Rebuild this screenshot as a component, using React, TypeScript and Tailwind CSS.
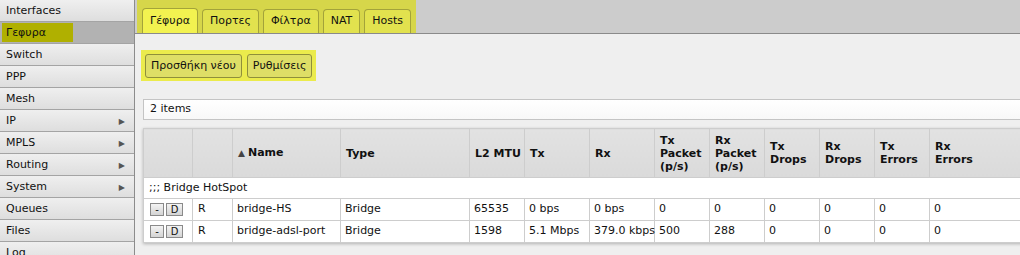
const menu = [
  { label: "Interfaces" },
  { label: "Γεφυρα", active: true },
  { label: "Switch" },
  { label: "PPP" },
  { label: "Mesh" },
  { label: "IP", sub: true },
  { label: "MPLS", sub: true },
  { label: "Routing", sub: true },
  { label: "System", sub: true },
  { label: "Queues" },
  { label: "Files" },
  { label: "Log" },
];

const tabs = ["Γέφυρα", "Πορτες", "Φίλτρα", "NAT", "Hosts"];

const columns = [
  { label: "", width: 49 },
  { label: "", width: 40 },
  { label: "Name", width: 108, sort: true },
  { label: "Type", width: 129 },
  { label: "L2 MTU", width: 55 },
  { label: "Tx", width: 65 },
  { label: "Rx", width: 65 },
  { label: "Tx\nPacket\n(p/s)", width: 55 },
  { label: "Rx\nPacket\n(p/s)", width: 55 },
  { label: "Tx\nDrops", width: 55 },
  { label: "Rx\nDrops", width: 55 },
  { label: "Tx\nErrors", width: 55 },
  { label: "Rx\nErrors", width: 100 },
];

const rows = [
  ["bridge-HS", "Bridge", "65535", "0 bps", "0 bps", "0", "0", "0", "0", "0", "0"],
  ["bridge-adsl-port", "Bridge", "1598", "5.1 Mbps", "379.0 kbps", "500", "288", "0", "0", "0", "0"],
];

function SmallButton({ label, w }: { label: string; w: string }) {
  return (
    <span
      className={`inline-flex h-[13px] ${w} items-center justify-center border border-[#8a8a8a] bg-gradient-to-b from-[#f4f4f4] to-[#d4d4d4] text-[10px] leading-none text-[#111]`}
    >
      {label}
    </span>
  );
}

export default function App() {
  return (
    <div className="flex h-[255px] w-[1020px] overflow-hidden bg-[#efefef] font-['DejaVu_Sans',Verdana,sans-serif] text-[11px] text-[#111]">
      {/* sidebar */}
      <aside className="flex w-[135px] shrink-0 flex-col border-r border-[#8c8c8c] bg-[#dcdcdc]">
        {menu.map((m) => (
          <div
            key={m.label}
            className={`flex h-[22px] shrink-0 items-center justify-between border-b border-[#a4a4a4] pt-[2px] pr-[9px] ${
              m.active ? "bg-[#b2b2b2] pl-[2px]" : "bg-gradient-to-b from-[#efefef] to-[#dedede] pl-[6px]"
            }`}
          >
            {m.active ? (
              <span className="-mt-[2px] flex h-[19px] w-[71px] items-center bg-[#b0b000] pt-[2px] pl-[4px]">
                {m.label}
              </span>
            ) : (
              <span>{m.label}</span>
            )}
            {m.sub && <span className="text-[8px] text-[#555]">▶</span>}
          </div>
        ))}
      </aside>

      {/* main */}
      <main className="flex min-w-0 flex-1 flex-col">
        <div className="flex h-[34px] shrink-0 items-end border-b border-[#8a8a8a] bg-[#cccccc] pl-[2px]">
          <div className="flex h-[34px] items-end gap-[4px] bg-[#d6d64a] px-[5px]">
            {tabs.map((t, i) => (
              <div
                key={t}
                className={`flex h-[24px] items-center rounded-t-[4px] border border-b-0 border-[#a3a33a] px-[7px] ${
                  i === 0 ? "h-[25px] bg-[#f2f250]" : "bg-[#e2e24e]"
                }`}
              >
                {t}
              </div>
            ))}
          </div>
        </div>

        <div className="mt-[16px] flex pl-[6px]">
          <div className="flex gap-[5px] bg-[#ebeb4c] px-[4px] pt-[4px] pb-[3px]">
            <button className="h-[24px] rounded-[3px] border border-[#8f8f3a] bg-[#dede66] px-[5px]">
              Προσθήκη νέου
            </button>
            <button className="h-[24px] rounded-[3px] border border-[#8f8f3a] bg-[#dede66] px-[5px]">
              Ρυθμίσεις
            </button>
          </div>
        </div>

        <div className="mt-[18px] ml-[8px] flex h-[21px] shrink-0 items-center border border-r-0 border-[#c4c4c4] bg-gradient-to-b from-[#ffffff] to-[#f8f8f8] pl-[6px]">
          2 items
        </div>

        <div className="mt-[8px] ml-[8px] w-[886px] shadow-[0_1px_3px_rgba(0,0,0,0.25)]">
          <table className="w-[886px] table-fixed border-collapse">
            <colgroup>
              {columns.map((c, i) => (
                <col key={i} style={{ width: c.width }} />
              ))}
            </colgroup>
            <thead>
              <tr className="h-[49px]">
                {columns.map((c, i) => (
                  <th
                    key={i}
                    className="border border-[#cdcdcd] bg-gradient-to-b from-[#e2e2e2] to-[#dadada] px-[5px] text-left align-middle text-[11px] leading-[13px] font-bold whitespace-pre"
                  >
                    {c.sort && <span className="mr-[3px] text-[9px] font-normal text-[#444]">▲</span>}
                    {c.label}
                  </th>
                ))}
              </tr>
            </thead>
            <tbody className="bg-white">
              <tr className="h-[21px]">
                <td colSpan={columns.length} className="border border-[#cdcdcd] px-[5px]">
                  ;;; Bridge HotSpot
                </td>
              </tr>
              {rows.map((r) => (
                <tr key={r[0]} className="h-[22px]">
                  <td className="border border-[#cdcdcd] pl-[6px]">
                    <div className="flex gap-[2px]">
                      <SmallButton label="-" w="w-[14px]" />
                      <SmallButton label="D" w="w-[17px]" />
                    </div>
                  </td>
                  <td className="border border-[#cdcdcd] px-[5px]">R</td>
                  {r.map((v, i) => (
                    <td key={i} className="border border-[#cdcdcd] pr-0 pl-[4px] whitespace-nowrap">
                      {v}
                    </td>
                  ))}
                </tr>
              ))}
            </tbody>
          </table>
        </div>
      </main>
    </div>
  );
}
